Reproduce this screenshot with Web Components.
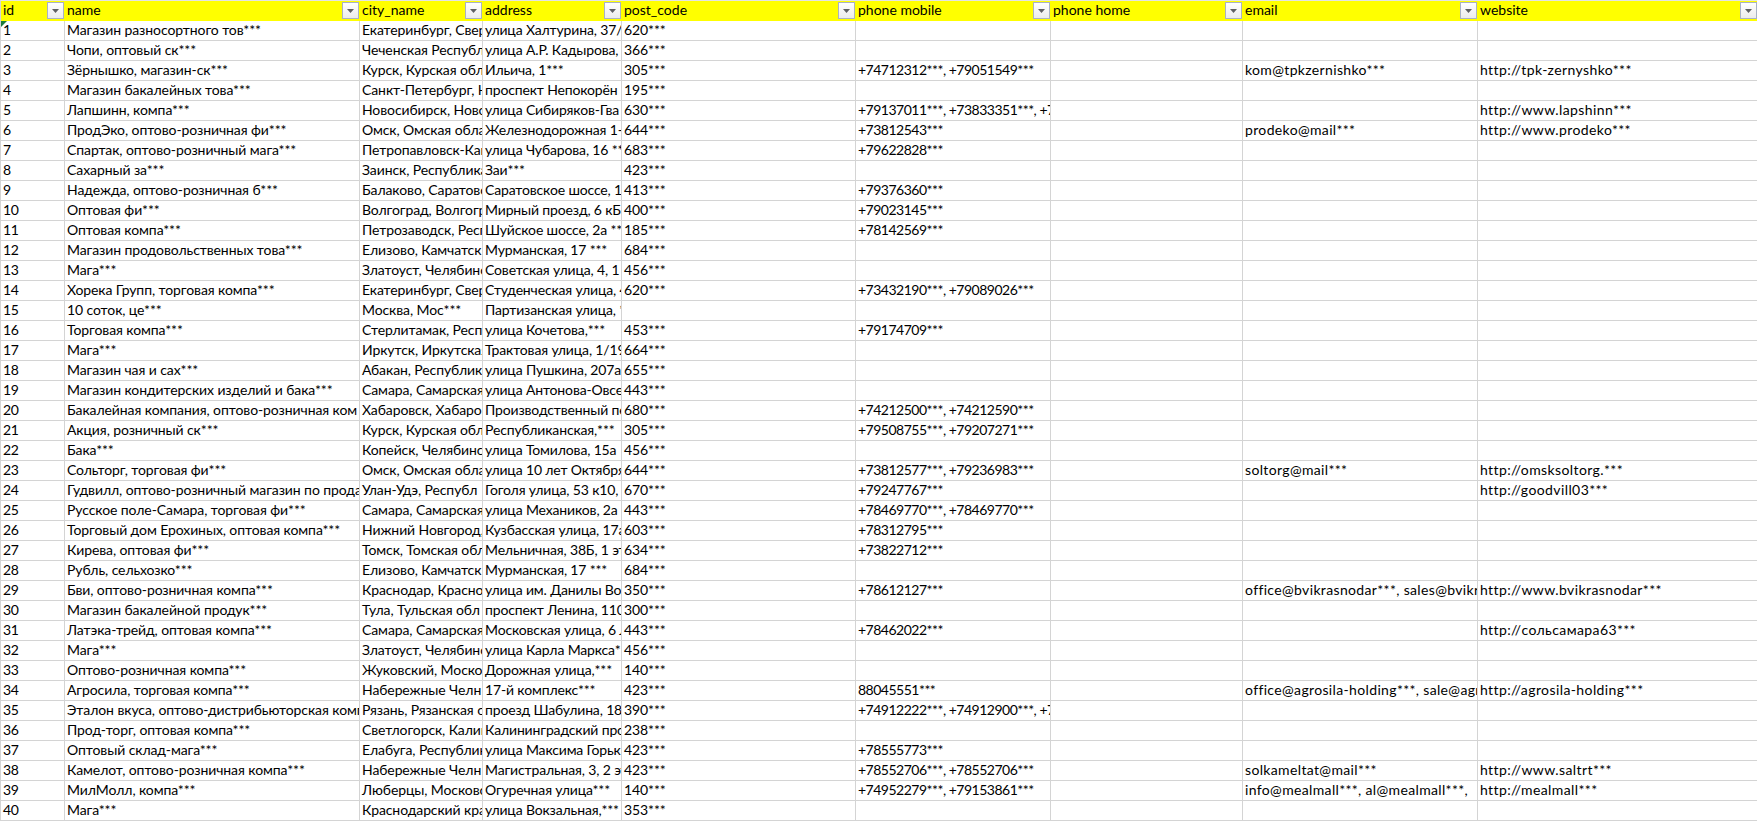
<!DOCTYPE html>
<html lang="ru">
<head>
<meta charset="utf-8">
<title>Лист</title>
<style>
  html, body { margin: 0; padding: 0; background: #fff; overflow: hidden; }
</style>
</head>
<body>
<xl-sheet id="sheet"></xl-sheet>

<script>
// column widths include the 1px gridline on the right of each column
const COLS = "64px 295px 123px 139px 234px 195px 192px 235px 280px";
const HEAD = ["id", "name", "city_name", "address", "post_code", "phone mobile", "phone home", "email", "website"];

const TRACK = ["-0.25px", "-0.09px", "-0.1px", "-0.15px", "-0.1px", "-0.5px", "0", "0.35px", "0.4px"];

// [name, city, address, post, mobile, email, website] — id comes from the position
const ROWS = [
  ["Магазин разносортного тов***", "Екатеринбург, Свер", "улица Халтурина, 37/", "620***"],
  ["Чопи, оптовый ск***", "Чеченская Республ", "улица А.Р. Кадырова,", "366***"],
  ["Зёрнышко, магазин-ск***", "Курск, Курская обл", "Ильича, 1***", "305***", "+74712312***, +79051549***", "kom@tpkzernishko***", "http://tpk-zernyshko***"],
  ["Магазин бакалейных това***", "Санкт-Петербург, Н", "проспект Непокорён", "195***"],
  ["Лапшинн, компа***", "Новосибирск, Ново", "улица Сибиряков-Гва", "630***", "+79137011***, +73833351***, +7", "", "http://www.lapshinn***"],
  ["ПродЭко, оптово-розничная фи***", "Омск, Омская обла", "Железнодорожная 1-", "644***", "+73812543***", "prodeko@mail***", "http://www.prodeko***"],
  ["Спартак, оптово-розничный мага***", "Петропавловск-Кам", "улица Чубарова, 16 **", "683***", "+79622828***"],
  ["Сахарный за***", "Заинск, Республика", "Заи***", "423***"],
  ["Надежда, оптово-розничная б***", "Балаково, Саратовс", "Саратовское шоссе, 1", "413***", "+79376360***"],
  ["Оптовая фи***", "Волгоград, Волгогр", "Мирный проезд, 6 кБ", "400***", "+79023145***"],
  ["Оптовая компа***", "Петрозаводск, Респ", "Шуйское шоссе, 2а **", "185***", "+78142569***"],
  ["Магазин продовольственных това***", "Елизово, Камчатск", "Мурманская, 17 ***", "684***"],
  ["Мага***", "Златоуст, Челябинс", "Советская улица, 4, 1", "456***"],
  ["Хорека Групп, торговая компа***", "Екатеринбург, Свер", "Студенческая улица, 4", "620***", "+73432190***, +79089026***"],
  ["10 соток, це***", "Москва, Мос***", "Партизанская улица, *", ""],
  ["Торговая компа***", "Стерлитамак, Респ", "улица Кочетова,***", "453***", "+79174709***"],
  ["Мага***", "Иркутск, Иркутская", "Трактовая улица, 1/19", "664***"],
  ["Магазин чая и сах***", "Абакан, Республик", "улица Пушкина, 207а*", "655***"],
  ["Магазин кондитерских изделий и бака***", "Самара, Самарская", "улица Антонова-Овсе", "443***"],
  ["Бакалейная компания, оптово-розничная ком", "Хабаровск, Хабаро", "Производственный пе", "680***", "+74212500***, +74212590***"],
  ["Акция, розничный ск***", "Курск, Курская обл", "Республиканская,***", "305***", "+79508755***, +79207271***"],
  ["Бака***", "Копейск, Челябинс", "улица Томилова, 15а", "456***"],
  ["Сольторг, торговая фи***", "Омск, Омская обла", "улица 10 лет Октября", "644***", "+73812577***, +79236983***", "soltorg@mail***", "http://omsksoltorg.***"],
  ["Гудвилл, оптово-розничный магазин по прода", "Улан-Удэ, Республ", "Гоголя улица, 53 к10, 4", "670***", "+79247767***", "", "http://goodvill03***"],
  ["Русское поле-Самара, торговая фи***", "Самара, Самарская", "улица Механиков, 2а", "443***", "+78469770***, +78469770***"],
  ["Торговый дом Ерохиных, оптовая компа***", "Нижний Новгород,", "Кузбасская улица, 17а", "603***", "+78312795***"],
  ["Кирева, оптовая фи***", "Томск, Томская обл", "Мельничная, 38Б, 1 эт", "634***", "+73822712***"],
  ["Рубль, сельхозко***", "Елизово, Камчатск", "Мурманская, 17 ***", "684***"],
  ["Бви, оптово-розничная компа***", "Краснодар, Красно", "улица им. Данилы Во", "350***", "+78612127***", "office@bvikrasnodar***, sales@bvikr", "http://www.bvikrasnodar***"],
  ["Магазин бакалейной продук***", "Тула, Тульская обл", "проспект Ленина, 110", "300***"],
  ["Латэка-трейд, оптовая компа***", "Самара, Самарская", "Московская улица, 6 Л", "443***", "+78462022***", "", "http://сольсамара63***"],
  ["Мага***", "Златоуст, Челябинс", "улица Карла Маркса*", "456***"],
  ["Оптово-розничная компа***", "Жуковский, Моско", "Дорожная улица,***", "140***"],
  ["Агросила, торговая компа***", "Набережные Челн", "17-й комплекс***", "423***", "88045551***", "office@agrosila-holding***, sale@agr", "http://agrosila-holding***"],
  ["Эталон вкуса, оптово-дистрибьюторская комп", "Рязань, Рязанская о", "проезд Шабулина, 18", "390***", "+74912222***, +74912900***, +7"],
  ["Прод-торг, оптовая компа***", "Светлогорск, Калин", "Калининградский про", "238***"],
  ["Оптовый склад-мага***", "Елабуга, Республик", "улица Максима Горьк", "423***", "+78555773***"],
  ["Камелот, оптово-розничная компа***", "Набережные Челн", "Магистральная, 3, 2 эт", "423***", "+78552706***, +78552706***", "solkameltat@mail***", "http://www.saltrt***"],
  ["МилМолл, компа***", "Люберцы, Москово", "Огуречная улица***", "140***", "+74952279***, +79153861***", "info@mealmall***, al@mealmall***,", "http://mealmall***"],
  ["Мага***", "Краснодарский кра", "улица Вокзальная,***", "353***"],
];

// one filled sheet: rows stacked in flow
class XlSheet extends HTMLElement {
  constructor() {
    super();
    this.attachShadow({ mode: "open" }).innerHTML = `<style>
      :host {
        display: block;
        position: relative;
        width: 1757px;
        height: 821px;
        overflow: hidden;
        border-top: 1px solid #e4e4e4;
        border-left: 1px solid #d4d4d4;
        box-sizing: border-box;
        --cols: ${COLS};
        font-family: Lato, "Noto Sans", sans-serif;
        font-size: 14px;
        color: #000;
      }
    </style><slot></slot>`;
  }
}

class XlRow extends HTMLElement {
  constructor() {
    super();
    this.attachShadow({ mode: "open" }).innerHTML = `<style>
      :host {
        display: grid;
        grid-template-columns: var(--cols);
        height: 20px;
        box-sizing: border-box;
        border-bottom: 1px solid #d4d4d4;
      }
      :host([head]) { background: #ff0; border-bottom: 0; }
    </style><slot></slot>`;
  }
}

class XlCell extends HTMLElement {
  constructor() {
    super();
    this.attachShadow({ mode: "open" }).innerHTML = `<style>
      :host {
        display: block;
        min-width: 0;
        overflow: hidden;
        white-space: nowrap;
        box-sizing: border-box;
        padding-left: 2px;
        line-height: 17px;
        border-right: 1px solid #d4d4d4;
      }
    </style><slot></slot>`;
  }
}

// header cell: label plus the autofilter button on the right
class XlHeadCell extends HTMLElement {
  constructor() {
    super();
    this.attachShadow({ mode: "open" }).innerHTML = `<style>
      :host {
        display: flex;
        justify-content: space-between;
        min-width: 0;
        overflow: hidden;
        white-space: nowrap;
        box-sizing: border-box;
        padding: 0 1px 0 2px;
        height: 20px;
        line-height: 17px;
      }
      button {
        all: unset;
        flex: none;
        box-sizing: border-box;
        width: 17px;
        height: 17px;
        margin-top: 1px;
        display: flex;
        align-items: center;
        justify-content: center;
        border: 1px solid #a9b2c4;
        background: linear-gradient(#fff, #ececec);
      }
      svg { display: block; }
    </style>
    <slot></slot>
    <button aria-label="filter"><svg width="7" height="4" viewBox="0 0 7 4"><path d="M0 0h7L3.5 4z" fill="#5f6063"/></svg></button>`;
  }
}

// green "number stored as text" corner of a cell
class XlCorner extends HTMLElement {
  constructor() {
    super();
    this.attachShadow({ mode: "open" }).innerHTML = `<style>
      :host { position: absolute; left: 0; top: 20px; display: block; width: 6px; height: 6px; }
      svg { display: block; }
    </style><svg width="6" height="6" viewBox="0 0 6 6"><path d="M0 0h6L0 6z" fill="#1c7a3c"/></svg>`;
  }
}

customElements.define("xl-sheet", XlSheet);
customElements.define("xl-row", XlRow);
customElements.define("xl-cell", XlCell);
customElements.define("xl-head-cell", XlHeadCell);
customElements.define("xl-corner", XlCorner);

const sheet = document.getElementById("sheet");

const headRow = document.createElement("xl-row");
headRow.setAttribute("head", "");
for (const label of HEAD) {
  const c = document.createElement("xl-head-cell");
  c.textContent = label;
  headRow.append(c);
}
sheet.append(headRow);

ROWS.forEach((r, i) => {
  const [name, city, addr, post, mobile = "", email = "", site = ""] = r;
  const row = document.createElement("xl-row");
  [i + 1, name, city, addr, post, mobile, "", email, site].forEach((text, col) => {
    const c = document.createElement("xl-cell");
    c.style.letterSpacing = TRACK[col];
    c.textContent = text;
    row.append(c);
  });
  sheet.append(row);
});

sheet.append(document.createElement("xl-corner"));
</script>
</body>
</html>
